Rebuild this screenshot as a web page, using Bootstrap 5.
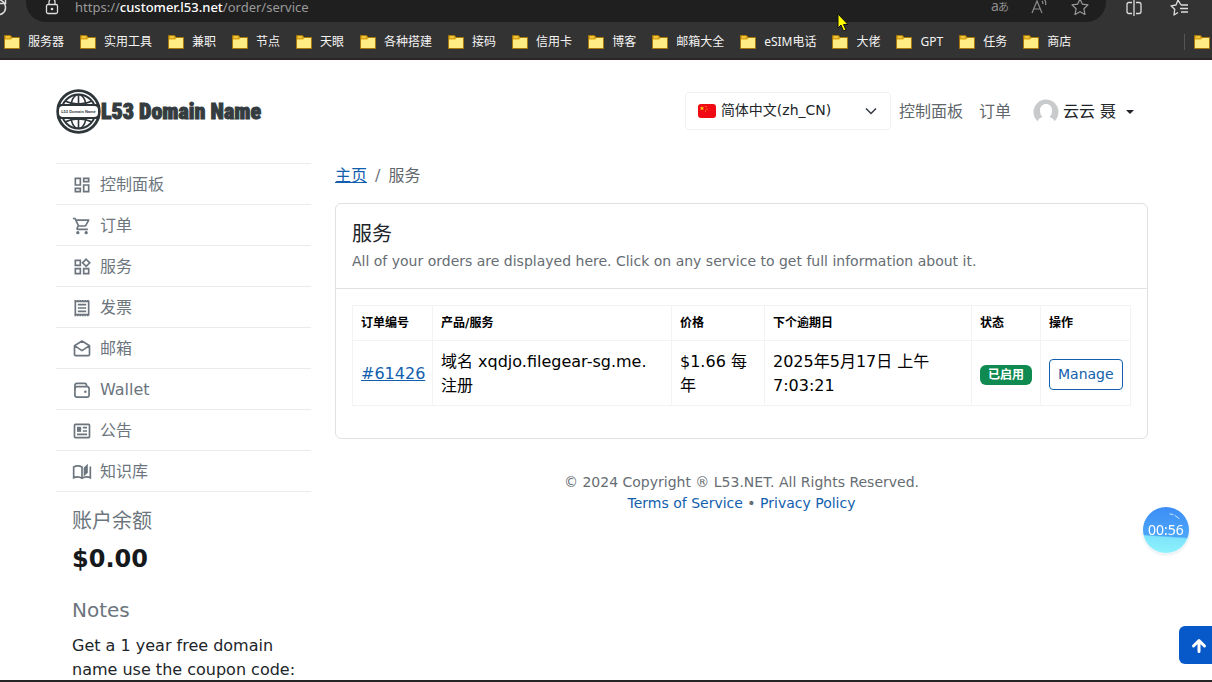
<!DOCTYPE html>
<html lang="zh-CN">
<head>
<meta charset="utf-8">
<meta name="viewport" content="width=device-width, initial-scale=1">
<title>服务 - L53 Domain Name</title>
<link href="https://cdn.jsdelivr.net/npm/bootstrap@5.3.0/dist/css/bootstrap.min.css" rel="stylesheet">
<style>
  :root { --ui: "DejaVu Sans", "Noto Sans CJK SC", sans-serif; --link: #1260ad; --grey: #6c757d; }
  body { font-family: var(--ui); height: 100vh; color: #212529; overflow: hidden; }
  a { color: var(--link); }

  /* browser frame */
  .chrome { background: #333; border-bottom: 2px solid #2b2428; font-family: "Noto Sans", "Noto Sans CJK SC", sans-serif; }
  .toolbar { height: 22px; color: #ddd; }
  .omnibox { height: 22px; background: #1f1f1f; color: #9a9a9a; border-radius: 0 0 20px 20px; margin-left: 7px; padding: 0 16px 8px 0; }
  .omni-actions { gap: 20px; }
  .address { font-size: 13px; line-height: 14px; margin-left: 13px; }
  .address b { color: #fff; font-weight: 500; }
  .toolbtn { background: none; border: 0; padding: 0; color: inherit; line-height: 1; }
  .toolbar svg { display: block; }
  .marks { height: 36px; font-size: 12px; gap: 16px; padding: 4px 0 0 4px; white-space: nowrap; }
  .marks a { color: #f4f4f4; }
  .marks-end { border-left: 1px solid #555; height: 16px; padding-left: 9px; margin-right: -6px; }
  .frame-end { height: 2px; background: #252526; }
  .pointer { left: 837px; top: 13px; z-index: 20; }

  /* page */
  .viewport { overflow: hidden; min-height: 0; padding-right: 8px; }
  .wrap { max-width: 1116px; }
  .masthead { height: 103px; }
  .wordmark { font: 900 22px/32px "Roboto Condensed", "Open Sans Condensed", Roboto, sans-serif; color: #343c40; -webkit-text-stroke: 1px #343c40; }
  .globe-text { font: bold 4px "Liberation Sans", sans-serif; }
  .lang { width: 206px; height: 38px; margin-bottom: 2px; font-size: 14px; border-color: #eff2f4; border-radius: 4px; padding: 0 36px 0 35px; color: #212529; background-color: #fff;
    background-image:
      url("data:image/svg+xml,%3Csvg xmlns='http://www.w3.org/2000/svg' viewBox='0 0 18 14'%3E%3Crect width='18' height='14' rx='3' fill='%23f00a14'/%3E%3Cpath d='M4 2l.6 1.6h1.7L5 4.600l.5 1.700L4 5.300 2.500 6.300 3 4.600 1.700 3.600h1.700z' fill='%23ffd21f'/%3E%3Ccircle cx='8' cy='2.500' r='.6' fill='%23ffd21f'/%3E%3Ccircle cx='9' cy='5' r='.6' fill='%23ffd21f'/%3E%3Ccircle cx='7.500' cy='7' r='.6' fill='%23ffd21f'/%3E%3C/svg%3E"),
      url("data:image/svg+xml,%3Csvg xmlns='http://www.w3.org/2000/svg' viewBox='0 0 12 12'%3E%3Cpath d='M1 3.500l5 5 5-5' fill='none' stroke='%23343a40' stroke-width='1.500'/%3E%3C/svg%3E");
    background-position: 12px center, right 13px center; background-size: 18px 14px, 12px 12px; }
  .topnav a { color: #5f666c; }
  .topnav .account { color: #212529; padding-left: 14px; padding-right: 14px; }
  .account::after { margin-left: 10px; }

  .side .list-group-item { color: var(--grey); background: none; padding: 9px 16px 8px; height: 41px; border-color: #e9ecec; border-width: 0 0 1px; gap: 8px; }
  .side .list-group { border-top: 1px solid #e9ecec; }
  .side .list-group-item:last-child { border-bottom-width: 1px; }
  .side-notes { padding: 17px 8px 16px 16px; }
  .side-title { font-size: 20px; line-height: 24px; font-weight: 400; color: var(--grey); }
  .balance { font-size: 24px; line-height: 32px; margin: 10px 0 23px; color: #16191c; }

  .crumbs { --bs-breadcrumb-divider-color: #6c757d; --bs-breadcrumb-item-active-color: #5f666c; padding-top: 1px; margin-bottom: 15px; }
  .panel { border-color: #dee2e2; border-radius: 6px; }
  .panel .card-header { background: none; padding: 18px 16px 16px; border-color: #dee2e2; }
  .panel-title { font-size: 20px; line-height: 24px; font-weight: 400; margin-bottom: 5px; }
  .sub { font-size: 14px; line-height: 21px; color: #666d73; }
  .orders { table-layout: fixed; color: #000; border-color: #f1f3f4; }
  .orders th { font-size: 12px; line-height: 18px; }
  .orders td { padding-top: 9px; padding-bottom: 7px; }
  .c-id { width: 80px } .c-price { width: 93px } .c-due { width: 207px } .c-state { width: 69px } .c-act { width: 90px }
  .pill { background: #0f8a50; font-size: 12px; line-height: 12px; padding: 4px 8px; border-radius: 6px; vertical-align: middle; }
  .manage { --bs-btn-color: var(--link); --bs-btn-border-color: var(--link); --bs-btn-font-size: 14px; border-radius: 4px; }
  .copyright { padding-top: 33px; }

  .timer { width: 46px; height: 46px; right: 23px; top: 507px; color: #fff; font: 14px/46px "Noto Sans", sans-serif;
    background: linear-gradient(184deg, transparent 62%, #7ee4fb 65%, #8ff3fb), linear-gradient(#3c8df5, #55b4fb); box-shadow: 0 2px 2px 1px #edf3f6; }
  .glint { right: 8px; top: 6px; }
  .to-top { right: 0; bottom: 18px; width: 33px; height: 38px; background: #0758c9; color: #fff; border: 0; border-radius: 6px 0 0 6px; padding: 0 0 0 7px; }
</style>
</head>
<body class="d-flex flex-column">

<svg width="0" height="0" class="position-absolute" aria-hidden="true">
  <symbol id="folder" viewBox="0 0 16 16"><path d="M.5 1.500h6l1.500 2h7.500v11H.5z" fill="#d9a514" stroke="#a9780c"/><path d="M2 2.500h4v1H2z" fill="#ffe66b"/><path d="M1 5.500h6l1.500-1.500H15v10H1z" fill="#ffec84"/></symbol>
</svg>

<header class="chrome flex-shrink-0">
  <div class="toolbar d-flex align-items-end">
    <button class="toolbtn mb-1" aria-label="刷新"><svg width="19" height="20" viewBox="0 0 19 20" fill="none" stroke="currentColor" stroke-width="1.500"><path d="M-4 16c4 2 10-1 9.500-7C5 5 3 3 0 2M5.500 0v5.500H0"/></svg></button>
    <div class="omnibox flex-grow-1 d-flex align-items-center">
      <svg class="ms-3" width="20" height="20" viewBox="0 0 20 20" fill="none" stroke="#ddd" stroke-width="1.300"><rect x="4.500" y="7.500" width="11" height="9" rx="1.500"/><path d="M7 7V5a3 3 0 016 0v2"/><circle cx="10" cy="12" r=".7" fill="#ddd"/></svg>
      <span class="address flex-grow-1">https://<b>customer.l53.net</b>/order/service</span>
      <div class="omni-actions d-flex">
        <button class="toolbtn" aria-label="翻译"><svg width="20" height="20" viewBox="0 0 20 20" font-family="Noto Sans, Noto Sans CJK JP, sans-serif" fill="#8d8d8d"><text x="1" y="14" font-size="14">a</text><text x="8" y="14" font-size="11">あ</text></svg></button>
        <button class="toolbtn" aria-label="朗读"><svg width="20" height="20" viewBox="0 0 20 20" fill="none" stroke="#8d8d8d" stroke-width="1.200"><path d="M2 16L7 4l5 12M4 12h6M12 4c1 1 1 2 1 3M14 2c2 2 2 4 1.500 6"/></svg></button>
        <button class="toolbtn" aria-label="收藏"><svg width="20" height="20" viewBox="0 0 20 20" fill="none" stroke="#999" stroke-width="1.200" stroke-linejoin="round"><path d="M10 2l2.400 5.200 5.600.7-4.100 3.900 1.100 5.700-5-2.800-5 2.800 1.100-5.700L2 7.900l5.600-.7z"/></svg></button>
      </div>
    </div>
    <button class="toolbtn ms-3 mb-1 ps-1" aria-label="分屏"><svg width="16" height="20" viewBox="0 0 16 20" fill="none" stroke="currentColor" stroke-width="1.300"><path d="M6 4.500H3A2 2 0 001 6.500v7a2 2 0 002 2h3M10 4.500h3a2 2 0 012 2v7a2 2 0 01-2 2h-3M8 2v16"/></svg></button>
    <button class="toolbtn ms-4 me-4 mb-1 ps-1" aria-label="收藏夹"><svg width="18" height="20" viewBox="0 0 18 20" fill="none" stroke="currentColor" stroke-width="1.300" stroke-linejoin="round"><path d="M11 7L8 2 6 7l-5 .8 3.700 3.500L4 17l4-2.500M11 7h7M10 10.500h8M11 14h7"/></svg></button>
  </div>
  <nav class="marks d-flex align-items-center" aria-label="收藏夹栏">
    <a href="#" class="d-flex align-items-center gap-2 text-decoration-none"><svg width="16" height="16"><use href="#folder"/></svg>服务器</a>
    <a href="#" class="d-flex align-items-center gap-2 text-decoration-none"><svg width="16" height="16"><use href="#folder"/></svg>实用工具</a>
    <a href="#" class="d-flex align-items-center gap-2 text-decoration-none"><svg width="16" height="16"><use href="#folder"/></svg>兼职</a>
    <a href="#" class="d-flex align-items-center gap-2 text-decoration-none"><svg width="16" height="16"><use href="#folder"/></svg>节点</a>
    <a href="#" class="d-flex align-items-center gap-2 text-decoration-none"><svg width="16" height="16"><use href="#folder"/></svg>天眼</a>
    <a href="#" class="d-flex align-items-center gap-2 text-decoration-none"><svg width="16" height="16"><use href="#folder"/></svg>各种搭建</a>
    <a href="#" class="d-flex align-items-center gap-2 text-decoration-none"><svg width="16" height="16"><use href="#folder"/></svg>接码</a>
    <a href="#" class="d-flex align-items-center gap-2 text-decoration-none"><svg width="16" height="16"><use href="#folder"/></svg>信用卡</a>
    <a href="#" class="d-flex align-items-center gap-2 text-decoration-none"><svg width="16" height="16"><use href="#folder"/></svg>博客</a>
    <a href="#" class="d-flex align-items-center gap-2 text-decoration-none"><svg width="16" height="16"><use href="#folder"/></svg>邮箱大全</a>
    <a href="#" class="d-flex align-items-center gap-2 text-decoration-none"><svg width="16" height="16"><use href="#folder"/></svg>eSIM电话</a>
    <a href="#" class="d-flex align-items-center gap-2 text-decoration-none"><svg width="16" height="16"><use href="#folder"/></svg>大佬</a>
    <a href="#" class="d-flex align-items-center gap-2 text-decoration-none"><svg width="16" height="16"><use href="#folder"/></svg>GPT</a>
    <a href="#" class="d-flex align-items-center gap-2 text-decoration-none"><svg width="16" height="16"><use href="#folder"/></svg>任务</a>
    <a href="#" class="d-flex align-items-center gap-2 text-decoration-none"><svg width="16" height="16"><use href="#folder"/></svg>商店</a>
    <a href="#" class="marks-end ms-auto d-flex align-items-center pe-2" aria-label="其他收藏夹"><svg width="16" height="16"><use href="#folder"/></svg></a>
  </nav>
</header>
<svg class="pointer position-absolute" width="13" height="20" viewBox="0 0 13 20" aria-hidden="true"><path d="M1 1v14l3-3 2.500 6 2.500-1-2.500-5.500h4.500z" fill="#ff0" stroke="#111"/></svg>

<div class="viewport flex-grow-1">
  <div class="container wrap">
    <div class="masthead d-flex align-items-center justify-content-between">
      <a href="#" class="d-flex align-items-center text-decoration-none">
        <svg width="45" height="45" viewBox="0 0 45 45" fill="none" stroke="#2e3639" aria-hidden="true">
          <circle cx="22.500" cy="22.500" r="20.800" stroke-width="2.800"/><circle cx="22.500" cy="22.500" r="17" stroke-width="2"/>
          <ellipse cx="22.500" cy="22.500" rx="8.500" ry="17" stroke-width="1.600"/><path d="M22.500 5v35M9 12c8 4 19 4 27 0M9 33c8-4 19-4 27 0" stroke-width="1.600"/>
          <rect x="1" y="15" width="43" height="15" rx="2" fill="#2e3639" stroke="none"/><rect x="3" y="17" width="39" height="11" rx="4" fill="#fff" stroke="none"/>
          <text class="globe-text" x="22.500" y="24" text-anchor="middle" fill="#2e3639" stroke="none">L53 Domain Name</text>
        </svg>
        <span class="wordmark">L53 Domain Name</span>
      </a>
      <div class="topnav d-flex align-items-center">
        <select class="form-select lang" aria-label="语言"><option>简体中文(zh_CN)</option></select>
        <a href="#" class="text-decoration-none px-2">控制面板</a>
        <a href="#" class="text-decoration-none px-2">订单</a>
        <a href="#" class="account dropdown-toggle text-decoration-none d-flex align-items-center">
          <svg class="me-1" width="26" height="26" viewBox="0 0 26 26" aria-hidden="true"><circle cx="13" cy="13" r="12.500" fill="#c9cacc"/><path d="M4.500 22.500c1-3 3.500-4 5-4.500-2-2-2.500-4-2.500-6.500C7 7.500 9.500 5 13 5s6 2.500 6 6.500c0 2.500-.5 4.500-2.500 6.500 1.500.5 4 1.500 5 4.500L19 26H7z" fill="#fff"/></svg>
          云云 聂</a>
      </div>
    </div>

    <div class="row">
      <aside class="side col-3">
        <nav class="list-group list-group-flush">
          <a href="#" class="list-group-item d-flex align-items-center"><svg width="20" height="20" viewBox="0 0 24 24" fill="none" stroke="currentColor" stroke-width="2"><path d="M4 4h6v8H4zM14 4h6v4h-6zM14 12h6v8h-6zM4 16h6v4H4z"/></svg>控制面板</a>
          <a href="#" class="list-group-item d-flex align-items-center"><svg width="20" height="20" viewBox="0 0 24 24" fill="currentColor"><path d="M15.550 13c.75 0 1.410-.41 1.750-1.030l3.580-6.490A.996.996 0 0020.010 4H5.210l-.94-2H1v2h2l3.600 7.590-1.350 2.440C4.520 15.370 5.480 17 7 17h12v-2H7l1.100-2h7.450zM6.160 6h12.150l-2.760 5H8.530L6.160 6zM7 18a2 2 0 100 4 2 2 0 000-4zm10 0a2 2 0 100 4 2 2 0 000-4z"/></svg>订单</a>
          <a href="#" class="list-group-item d-flex align-items-center"><svg width="20" height="20" viewBox="0 0 24 24" fill="none" stroke="currentColor" stroke-width="2"><path d="M4 4h6v6H4zM4 14h6v6H4zM14 14h6v6h-6zM17 2.700L21.300 7 17 11.300 12.700 7z"/></svg>服务</a>
          <a href="#" class="list-group-item d-flex align-items-center"><svg width="20" height="20" viewBox="0 0 24 24" fill="none" stroke="currentColor"><path d="M4 4h16v16H4zM7 8h10M7 12h10M7 16h10" stroke-width="2"/><path d="M3 3h18M3 21h18" stroke-width="1.500" stroke-dasharray="2 1"/></svg>发票</a>
          <a href="#" class="list-group-item d-flex align-items-center"><svg width="20" height="20" viewBox="0 0 24 24" fill="none" stroke="currentColor" stroke-width="2" stroke-linejoin="round"><path d="M3 8l9-5.500L21 8v10.500a1.500 1.500 0 01-1.500 1.500h-15A1.500 1.500 0 013 18.500zM3 8l9 6 9-6"/></svg>邮箱</a>
          <a href="#" class="list-group-item d-flex align-items-center"><svg width="20" height="20" viewBox="0 0 24 24" fill="none" stroke="currentColor" stroke-width="2"><rect x="3.500" y="8" width="17" height="12.500" rx="2.500"/><path d="M3.500 11V6.500A2.500 2.500 0 016 4h9a2.500 2.500 0 012.500 2.500V8"/><circle cx="16" cy="14" r="1.500" fill="currentColor" stroke="none"/></svg>Wallet</a>
          <a href="#" class="list-group-item d-flex align-items-center"><svg width="20" height="20" viewBox="0 0 24 24" fill="none" stroke="currentColor" stroke-width="2"><rect x="3" y="4" width="18" height="16" rx="1"/><path d="M6 7h5v6H6z" fill="currentColor" stroke="none"/><path d="M13 8h5M13 12h5M6 16h12"/></svg>公告</a>
          <a href="#" class="list-group-item d-flex align-items-center"><svg width="20" height="20" viewBox="0 0 24 24" fill="none" stroke="currentColor" stroke-width="2"><path d="M12 19.500V6C9 4.500 5 4.500 2 6v13c3-1.500 7-1.500 10 .5 3-2 7-2 10-.5V5.500"/><path d="M14 7l5-5v11l-5 4.500z" fill="currentColor" stroke="none"/></svg>知识库</a>
        </nav>
        <div class="side-notes">
          <h5 class="side-title mb-0">账户余额</h5>
          <p class="balance fw-bold">$0.00</p>
          <h5 class="side-title mb-2 pb-1">Notes</h5>
          <p class="mb-0">Get a 1 year free domain name use the coupon code:</p>
        </div>
      </aside>

      <main class="col-9">
        <nav aria-label="breadcrumb"><ol class="breadcrumb crumbs">
          <li class="breadcrumb-item"><a href="#">主页</a></li>
          <li class="breadcrumb-item active" aria-current="page">服务</li>
        </ol></nav>
        <section class="card panel">
          <div class="card-header">
            <h5 class="panel-title">服务</h5>
            <div class="sub">All of your orders are displayed here. Click on any service to get full information about it.</div>
          </div>
          <div class="card-body">
            <table class="table table-bordered align-middle orders">
              <colgroup><col class="c-id"><col><col class="c-price"><col class="c-due"><col class="c-state"><col class="c-act"></colgroup>
              <thead><tr><th scope="col">订单编号</th><th scope="col">产品/服务</th><th scope="col">价格</th><th scope="col">下个逾期日</th><th scope="col">状态</th><th scope="col">操作</th></tr></thead>
              <tbody><tr>
                <td class="text-nowrap"><a href="#">#61426</a></td><td>域名 xqdjo.filegear-sg.me. 注册</td><td>$1.66 每年</td><td>2025年5月17日 上午7:03:21</td>
                <td><span class="badge pill">已启用</span></td>
                <td class="text-nowrap"><button type="button" class="btn btn-sm btn-outline-primary manage">Manage</button></td>
              </tr></tbody>
            </table>
          </div>
        </section>
        <footer class="copyright sub text-center">
          <div>© 2024 Copyright ® L53.NET. All Rights Reserved.</div>
          <div><a href="#" class="text-decoration-none">Terms of Service</a> • <a href="#" class="text-decoration-none">Privacy Policy</a></div>
        </footer>
      </main>
    </div>
  </div>
</div>
<div class="frame-end flex-shrink-0"></div>

<div class="timer position-fixed rounded-circle text-center">00:56<svg class="glint position-absolute" width="12" height="8" viewBox="0 0 12 8" fill="none" stroke="#cfe8ff" stroke-linecap="round"><path d="M1 1l3 .5M6 2.500l4 3"/></svg></div>
<button class="to-top position-fixed" aria-label="返回顶部"><svg width="16" height="16" viewBox="0 0 16 16" fill="none" stroke="currentColor" stroke-width="3" stroke-linecap="round" stroke-linejoin="round"><path d="M8 13.500V3M2.500 8L8 2.500 13.500 8"/></svg></button>

<script src="https://cdn.jsdelivr.net/npm/bootstrap@5.3.0/dist/js/bootstrap.bundle.min.js"></script>
</body>
</html>
